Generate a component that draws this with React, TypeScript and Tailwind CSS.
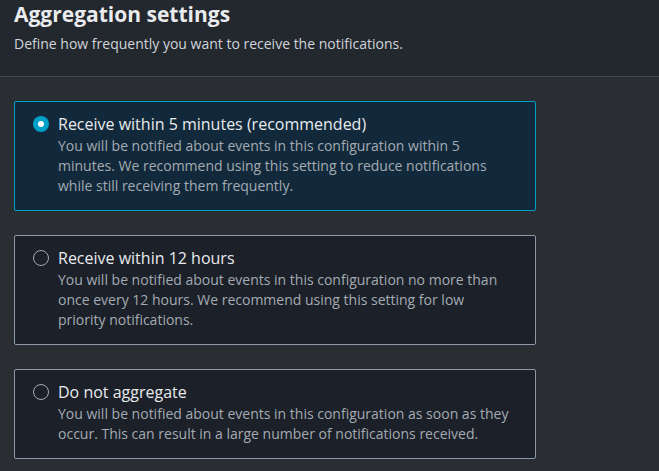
import { useState } from "react";

const options = [
  {
    id: "5min",
    title: "Receive within 5 minutes (recommended)",
    description:
      "You will be notified about events in this configuration within 5 minutes. We recommend using this setting to reduce notifications while still receiving them frequently.",
  },
  {
    id: "12h",
    title: "Receive within 12 hours",
    description:
      "You will be notified about events in this configuration no more than once every 12 hours. We recommend using this setting for low priority notifications.",
  },
  {
    id: "none",
    title: "Do not aggregate",
    description:
      "You will be notified about events in this configuration as soon as they occur. This can result in a large number of notifications received.",
  },
];

export default function App() {
  const [selected, setSelected] = useState("5min");

  return (
    <div className="min-h-screen bg-[#2a2e33] font-['Open_Sans',sans-serif]">
      {/* Header */}
      <div className="h-[77px] bg-[#23272e] border-b border-[#414750] px-[14px] pt-[1px]">
        <h2 className="text-[21px] leading-[26px] font-bold text-[#e9ebed]">Aggregation settings</h2>
        <p className="mt-[7px] text-[14px] leading-[20px] text-[#d1d5db]">
          Define how frequently you want to receive the notifications.
        </p>
      </div>

      {/* Tiles */}
      <div className="px-[14px] pt-[24px] flex flex-col gap-[24px]">
        {options.map((opt) => {
          const isSelected = selected === opt.id;
          return (
            <div
              key={opt.id}
              onClick={() => setSelected(opt.id)}
              className={`w-[522px] border rounded-[2px] pl-[18px] pr-[24px] pt-[10px] pb-[14px] flex items-start gap-[9px] cursor-pointer ${
                isSelected ? "bg-[#12293b] border-[#00a1c9]" : "bg-[#1b2029] border-[#8d99a8]"
              }`}
            >
              <div className="h-[24px] flex items-center shrink-0">
                {isSelected ? (
                  <div className="w-[16px] h-[16px] rounded-full bg-[#00a1c9] flex items-center justify-center">
                    <div className="w-[6px] h-[6px] rounded-full bg-white" />
                  </div>
                ) : (
                  <div className="w-[16px] h-[16px] rounded-full border-[1.5px] border-[#a3acb7]" />
                )}
              </div>
              <div>
                <div className="text-[16px] leading-[24px] text-[#e9ebed]">{opt.title}</div>
                <p className="text-[14px] leading-[20px] text-[#a4abb2]">{opt.description}</p>
              </div>
            </div>
          );
        })}
      </div>
    </div>
  );
}
